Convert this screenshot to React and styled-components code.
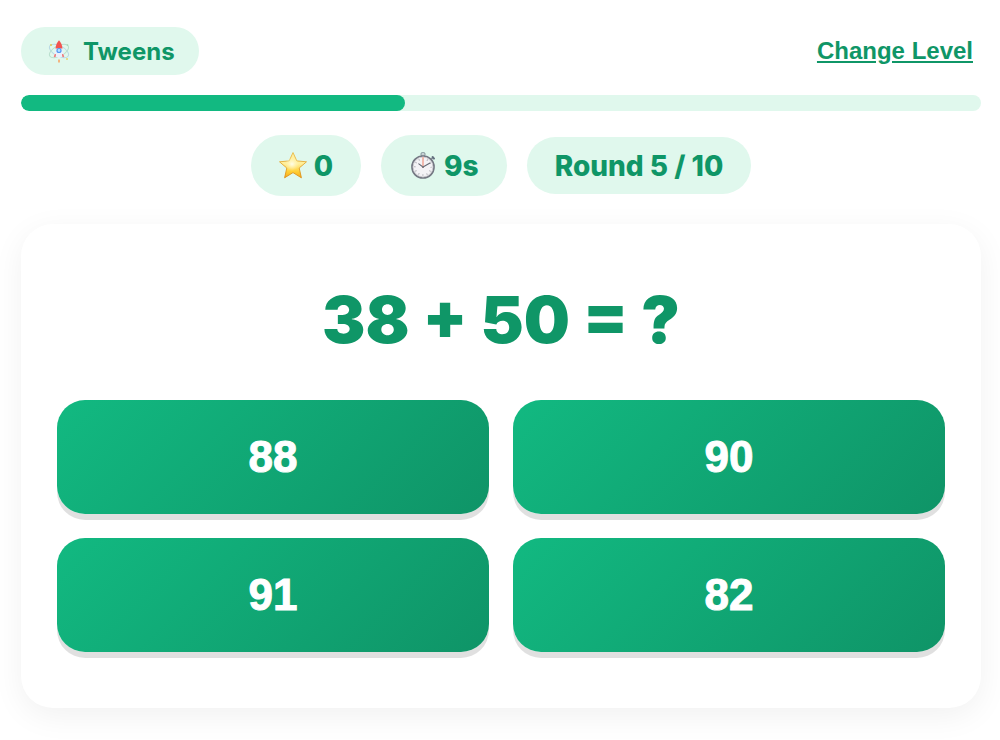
import React from "react";
import styled, { createGlobalStyle } from "styled-components";

const GlobalStyle = createGlobalStyle`
  *, *::before, *::after { box-sizing: border-box; }
  body {
    margin: 0;
    background: #fff;
    color: #0f9667;
    font-family: Inter, "Liberation Sans", sans-serif;
  }
`;

const Page = styled.main`
  padding: 27px 19px 32px 21px;
`;

const TopBar = styled.header`
  display: flex;
  align-items: center;
  justify-content: space-between;
  padding-right: 8px;
`;

const LevelBadge = styled.div`
  display: flex;
  align-items: center;
  gap: 10px;
  height: 48px;
  padding: 0 24px;
  border-radius: 24px;
  background: #e0f8ed;
  font-size: 24px;
  font-weight: 700;
`;

const ChangeLevel = styled.button`
  padding: 0;
  border: 0;
  background: none;
  color: inherit;
  font-family: "Liberation Sans", Arial, sans-serif;
  font-size: 24px;
  font-weight: 700;
  line-height: 28px;
  text-decoration: underline;
  cursor: pointer;
`;

const Track = styled.div`
  height: 16px;
  margin-top: 20px;
  border-radius: 8px;
  background: #e0f8ed;
  overflow: hidden;
`;

const Fill = styled.div`
  height: 100%;
  border-radius: 8px;
  background: #12b981;
`;

const Stats = styled.div`
  display: flex;
  flex-wrap: wrap;
  align-items: center;
  justify-content: center;
  gap: 20px;
  margin-top: 24px;
`;

const Stat = styled.div`
  display: flex;
  align-items: center;
  gap: 7px;
  height: ${(p) => (p.$plain ? "57px" : "61px")};
  padding: 0 28px;
  border-radius: 32px;
  background: #e0f8ed;
  font-size: 28px;
  font-weight: 800;
`;

const Card = styled.section`
  margin-top: 28px;
  padding: 56px 36px;
  border-radius: 32px;
  background: #fff;
  box-shadow: 0 8px 32px rgba(0, 0, 0, 0.06);
`;

const Question = styled.h1`
  margin: 0 0 40px;
  font-size: 65px;
  font-weight: 900;
  line-height: 80px;
  text-align: center;
`;

const Answers = styled.div`
  display: grid;
  grid-template-columns: 1fr 1fr;
  gap: 24px;
`;

const Answer = styled.button`
  padding: 32px;
  border: 0;
  border-radius: 28px;
  background: linear-gradient(135deg, #12b981, #0f9467);
  box-shadow: 0 6px 0 rgba(0, 0, 0, 0.12);
  color: #fff;
  font-family: "Liberation Sans", Arial, sans-serif;
  font-size: 44px;
  font-weight: 700;
  line-height: 50px;
  -webkit-text-stroke: 1px #fff;
  cursor: pointer;
`;

const Icon = styled.svg`
  flex: none;
  display: block;
`;

function RocketIcon() {
  return (
    <Icon width="28" height="24" viewBox="-2 0 28 24" fill="none" aria-hidden="true">
      <ellipse cx="12" cy="12" rx="10.5" ry="5.2" stroke="#b9d9e5" strokeWidth="1" transform="rotate(28 12 12)" />
      <ellipse cx="12" cy="12" rx="10.5" ry="5.2" stroke="#b9dfcd" strokeWidth="1" transform="rotate(-28 12 12)" />
      <path d="M9 9h6l2 8-5 2-5-2z" fill="#eaf0fa" />
      <path d="M12 1.2C10 3.3 8.9 5.8 8.5 9.5h7C15.1 5.8 14 3.3 12 1.2z" fill="#f25550" />
      <path d="M8.3 15L7.2 17.8l1.2-.3zM15.7 15l1.1 2.8-1.2-.3z" fill="#ee6868" stroke="#ee6868" strokeWidth=".7" />
      <circle cx="12" cy="11.5" r="2" fill="#b9e2ff" stroke="#5298f4" strokeWidth="1.2" />
      <path d="M12 20.5v3" stroke="#f2b681" strokeWidth="2" />
      <circle cx="4" cy="6" r="1" fill="#e8c94c" />
      <circle cx="20.5" cy="6" r=".8" fill="#a3d6ae" />
      <circle cx="20" cy="20" r="1" fill="#ead46e" />
    </Icon>
  );
}

function StarIcon() {
  return (
    <Icon width="28" height="28" viewBox="0 2 28 28" aria-hidden="true">
      <defs>
        <linearGradient id="starBody" x1="0" y1="0" x2="0" y2="1">
          <stop offset="0" stopColor="#fff0a0" />
          <stop offset=".45" stopColor="#ffef9a" />
          <stop offset=".75" stopColor="#ffcf35" />
          <stop offset="1" stopColor="#f9a915" />
        </linearGradient>
        <linearGradient id="starEdge" x1="0" y1="0" x2="0" y2="1">
          <stop offset="0" stopColor="#e9bd4b" />
          <stop offset="1" stopColor="#dc8c12" />
        </linearGradient>
        <radialGradient id="starGlow">
          <stop offset="0" stopColor="#fffde9" />
          <stop offset="1" stopColor="#fff6b9" stopOpacity="0" />
        </radialGradient>
      </defs>
      <path d="M14 2.5l3.8 8.4 9.7.9-7.3 6.2 2.2 9.8-8.4-5.2-8.4 5.2 2.2-9.8-7.3-6.2 9.7-.9z" fill="url(#starBody)" stroke="url(#starEdge)" strokeWidth=".9" strokeLinejoin="round" />
      <circle cx="13" cy="14" r="7" fill="url(#starGlow)" />
    </Icon>
  );
}

function StopwatchIcon() {
  return (
    <Icon width="28" height="28" viewBox="0 2 28 28" fill="none" aria-hidden="true">
      <rect x="12" y="2.5" width="4" height="3.6" rx="1.4" fill="#c7d2d4" stroke="#798b91" strokeWidth=".9" />
      <path d="M21.8 9.4l2.2-1.8" stroke="#8b959f" strokeWidth="1.6" />
      <path d="M23.6 7l1.4 1.6" stroke="#64707f" strokeWidth="2" strokeLinecap="round" />
      <circle cx="14" cy="17" r="11" fill="#f4f3f6" stroke="#747883" strokeWidth="1.7" />
      <circle cx="14" cy="17" r="9.9" stroke="#c8c7cc" strokeWidth=".8" />
      <circle cx="14" cy="17" r="8.1" stroke="#a4a3ab" strokeWidth="1.5" strokeDasharray=".9 3.341" strokeDashoffset=".45" />
      <path d="M14 18V7" stroke="#f1b3a7" strokeWidth="1.8" />
      <path d="M14 17l-4.2-3.1M14 17l7-4" stroke="#656974" strokeWidth="1.1" strokeLinecap="round" />
      <circle cx="14" cy="17" r="1" fill="#777780" />
    </Icon>
  );
}

const round = 5;
const totalRounds = 10;
const progress = ((round - 1) / totalRounds) * 100;
const options = [88, 90, 91, 82];

export default function App() {
  return (
    <>
      <GlobalStyle />
      <Page>
        <TopBar>
          <LevelBadge><RocketIcon />Tweens</LevelBadge>
          <ChangeLevel type="button">Change Level</ChangeLevel>
        </TopBar>
        <Track role="progressbar" aria-label="Game progress" aria-valuemin={0} aria-valuemax={100} aria-valuenow={progress}>
          <Fill style={{ width: `${progress}%` }} />
        </Track>
        <Stats>
          <Stat><StarIcon />0</Stat>
          <Stat><StopwatchIcon />9s</Stat>
          <Stat $plain>Round {round} / {totalRounds}</Stat>
        </Stats>
        <Card>
          <Question>38 + 50 = ?</Question>
          <Answers>
            {options.map((n) => <Answer type="button" key={n}>{n}</Answer>)}
          </Answers>
        </Card>
      </Page>
    </>
  );
}
